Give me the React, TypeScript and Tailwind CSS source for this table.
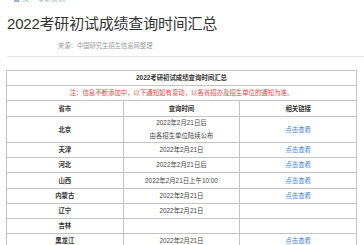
import React from "react";

const font = { fontFamily: '"Liberation Sans","Noto Sans CJK SC",sans-serif' };

type Row = { p: string; d: string[]; link: boolean; h: string };

const rows: Row[] = [
  { p: "北京", d: ["2022年2月21日后", "由各招生单位陆续公布"], link: true, h: "h-[26px]" },
  { p: "天津", d: ["2022年2月21日"], link: true, h: "h-[15px]" },
  { p: "河北", d: ["2022年2月21日后"], link: true, h: "h-[15px]" },
  { p: "山西", d: ["2022年2月21日上午10:00"], link: true, h: "h-[16px]" },
  { p: "内蒙古", d: ["2022年2月21日"], link: true, h: "h-[15px]" },
  { p: "辽宁", d: ["2022年2月21日"], link: false, h: "h-[15px]" },
  { p: "吉林", d: [], link: false, h: "h-[15px]" },
  { p: "黑龙江", d: ["2022年2月21日"], link: true, h: "h-[15px]" },
];

export default function App() {
  return (
    <div className="w-[364px] h-[245px] overflow-hidden bg-white" style={font}>
      <div className="h-[3px] overflow-hidden pl-[13px]">
        <div className="-mt-[5px] text-[7px] leading-[8px] text-[#9aa]">
          <span className="text-[#4a86c8]">首</span>
          <span className="ml-[2px]">页 &gt; 考研资讯</span>
        </div>
      </div>
      <div className="pl-[7px] pt-[11px] text-[15px] leading-[20px] text-[#333] tracking-[-0.2px]">
        2022考研初试成绩查询时间汇总
      </div>
      <div className="mt-[7px] pl-[58px] text-[6.3px] leading-[10px] text-[#999]">
        来源：中国研究生招生信息网整理
      </div>
      <div className="mt-[5px] ml-[7px] border-t border-[#e6e6e6]" />
      <table className="mt-[13px] ml-[6px] w-[351px] table-fixed border-collapse text-[6.4px] leading-[8px] text-[#333]">
        <tbody>
          <tr className="h-[15px]">
            <td colSpan={3} className="border border-[#c4c4c4] text-center font-bold p-0">
              2022考研初试成绩查询时间汇总
            </td>
          </tr>
          <tr className="h-[15px]">
            <td colSpan={3} className="border border-[#c4c4c4] text-center text-[#f03c3c] p-0">
              注：信息不断添加中，以下通知如有变动，以各省招办及招生单位的通知为准。
            </td>
          </tr>
          <tr className="h-[16px]">
            <td className="border border-[#c4c4c4] text-center font-bold p-0">省市</td>
            <td className="border border-[#c4c4c4] text-center font-bold p-0">查询时间</td>
            <td className="border border-[#c4c4c4] text-center font-bold p-0">相关链接</td>
          </tr>
          {rows.map((r) => (
            <tr key={r.p} className={r.h}>
              <td className="border border-[#c4c4c4] text-center font-bold p-0">{r.p}</td>
              <td className="border border-[#c4c4c4] text-center p-0 text-[#444]">
                {r.d.map((t, i) => (
                  <div key={i} className={i > 0 ? "mt-[5px]" : ""}>
                    {t}
                  </div>
                ))}
              </td>
              <td className="border border-[#c4c4c4] text-center p-0 text-[#3b7dd8]">
                {r.link ? "点击查看" : ""}
              </td>
            </tr>
          ))}
        </tbody>
      </table>
    </div>
  );
}
